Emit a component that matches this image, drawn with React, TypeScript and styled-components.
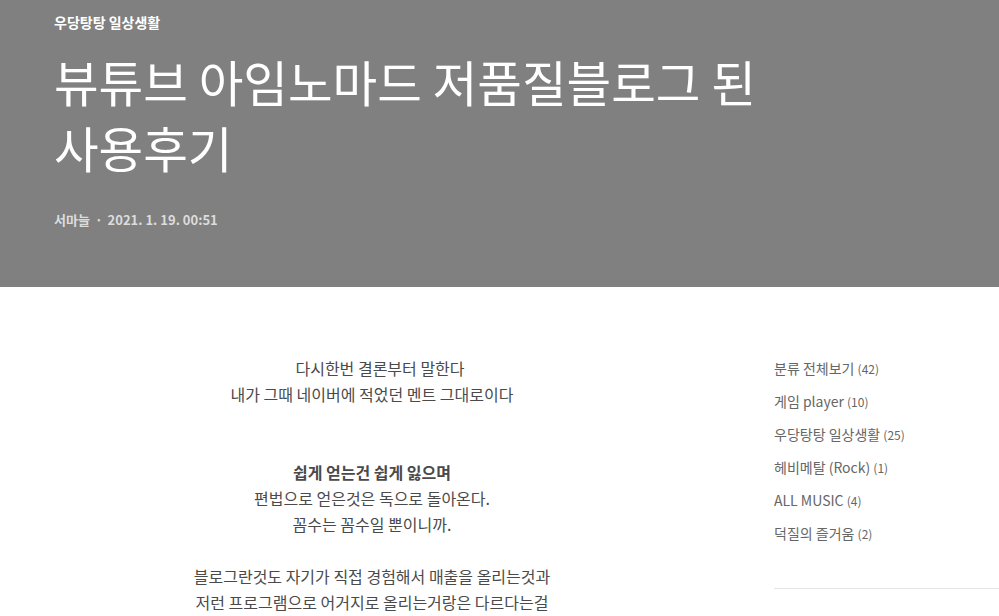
import React from "react";
import styled, { createGlobalStyle } from "styled-components";

const GlobalStyle = createGlobalStyle`
  html, body {
    margin: 0;
    padding: 0;
    background: #fff;
    font-family: "Noto Sans CJK KR", "Noto Sans", sans-serif;
  }
`;

interface Category {
  name: string;
  count: number;
}

const categories: Category[] = [
  { name: "분류 전체보기", count: 42 },
  { name: "게임 player", count: 10 },
  { name: "우당탕탕 일상생활", count: 25 },
  { name: "헤비메탈 (Rock)", count: 1 },
  { name: "ALL MUSIC", count: 4 },
  { name: "덕질의 즐거움", count: 2 }
];

const paragraphs: { text: string; bold?: boolean }[] = [
  { text: "다시한번 결론부터 말한다" },
  { text: "내가 그때 네이버에 적었던 멘트 그대로이다" },
  { text: "" },
  { text: "" },
  { text: "쉽게 얻는건 쉽게 잃으며", bold: true },
  { text: "편법으로 얻은것은 독으로 돌아온다." },
  { text: "꼼수는 꼼수일 뿐이니까." },
  { text: "" },
  { text: "블로그란것도 자기가 직접 경험해서 매출을 올리는것과" },
  { text: "저런 프로그램으로 어거지로 올리는거랑은 다르다는걸" }
];

const App: React.FC = () => {
  return (
    <Page>
      <GlobalStyle />
      <Hero>
        <CategoryLabel>우당탕탕 일상생활</CategoryLabel>
        <Title>뷰튜브 아임노마드 저품질블로그 된 사용후기</Title>
        <Meta>
          서마늘<Dot>·</Dot>2021. 1. 19. 00:51
        </Meta>
      </Hero>
      <Body>
        <Article>
          {paragraphs.map((p, i) => (
            <Line key={i} $bold={p.bold} $nudge={i === 0}>
              {p.text || "\u00a0"}
            </Line>
          ))}
        </Article>
        <Sidebar>
          <CategoryList>
            {categories.map((c) => (
              <CategoryItem key={c.name}>
                {c.name} <Count>({c.count})</Count>
              </CategoryItem>
            ))}
          </CategoryList>
          <Divider />
        </Sidebar>
      </Body>
    </Page>
  );
};

const Page = styled.div`
  width: 999px;
  height: 616px;
  overflow: hidden;
`;

const Hero = styled.header`
  background-color: #808080;
  height: 287px;
  box-sizing: border-box;
  padding: 12px 54px 0;
  color: #fff;
`;

const CategoryLabel = styled.div`
  font-size: 14px;
  font-weight: 700;
  line-height: 20px;
`;

const Title = styled.h1`
  margin: 16px 0 0;
  max-width: 730px;
  font-size: 48.5px;
  font-weight: 400;
  line-height: 66px;
  word-break: keep-all;
`;

const Meta = styled.div`
  margin-top: 30px;
  font-size: 13px;
  font-weight: 700;
  color: #dcdcdc;
  line-height: 20px;
`;

const Dot = styled.span`
  margin: 0 5px;
`;

const Body = styled.main`
  display: flex;
  align-items: flex-start;
  padding-top: 68px;
`;

const Article = styled.article`
  flex: 0 0 652px;
  margin-left: 46px;
  text-align: center;
  color: #4a4a4a;
`;

const Line = styled.p<{ $bold?: boolean; $nudge?: boolean }>`
  margin: 0;
  font-size: 16px;
  line-height: 26px;
  font-weight: ${({ $bold }) => ($bold ? 700 : 400)};
  padding-left: ${({ $nudge }) => ($nudge ? "16px" : "0")};
`;

const Sidebar = styled.aside`
  flex: 0 0 260px;
  margin-left: 76px;
  padding-top: 3px;
`;

const CategoryList = styled.ul`
  list-style: none;
  margin: 0;
  padding: 0;
`;

const CategoryItem = styled.li`
  height: 20px;
  font-size: 14px;
  line-height: 20px;
  color: #666;
  margin-bottom: 13px;
`;

const Count = styled.span`
  font-size: 12px;
  line-height: 1;
`;

const Divider = styled.hr`
  margin: 45px 0 0;
  border: 0;
  border-top: 1px solid #e5e5e5;
`;

export default App;
